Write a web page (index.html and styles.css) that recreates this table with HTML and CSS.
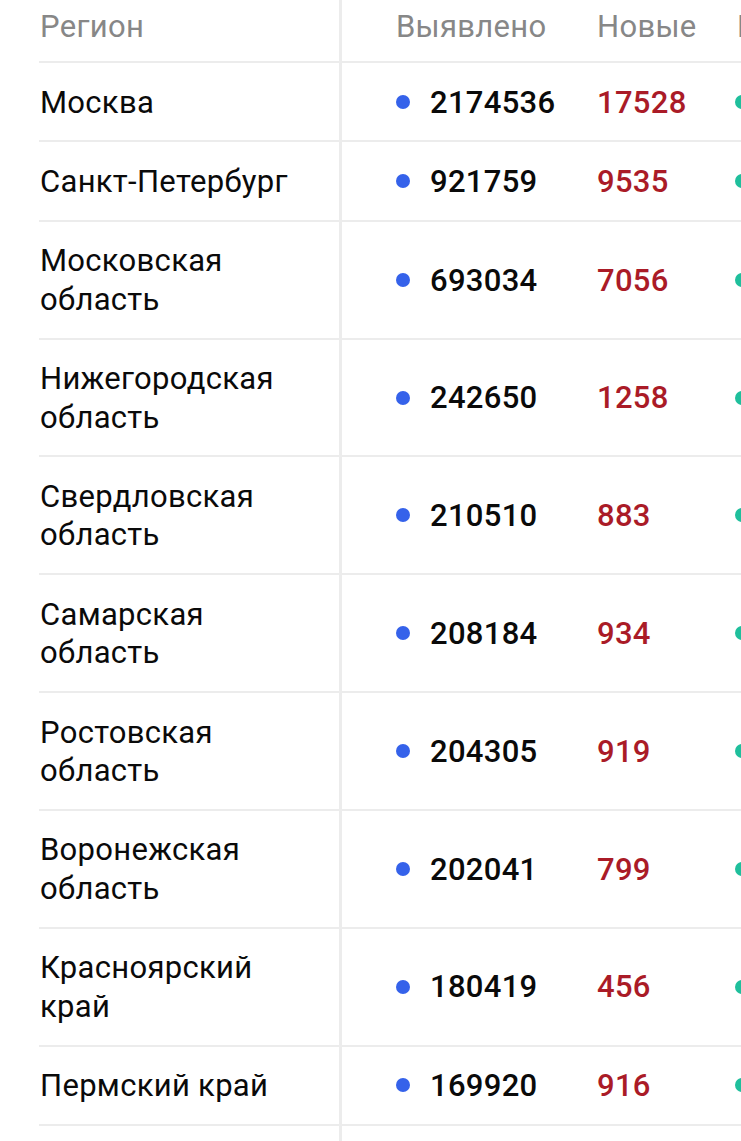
FILE: index.html
```html
<!DOCTYPE html>
<html lang="ru">
<head>
<meta charset="utf-8">
<title>Регионы</title>
<link rel="stylesheet" href="styles.css">
</head>
<body>
<div class="table">
  <div class="row head">
    <div class="cell region">Регион</div>
    <div class="cell c2">Выявлено</div>
    <div class="cell c3">Новые</div>
    <div class="cell c4">Выздоровели</div>
  </div>
  <div class="row">
    <div class="cell region">Москва</div>
    <div class="cell c2"><span class="dot blue"></span><span class="num">2174536</span></div>
    <div class="cell c3"><span class="num red">17528</span></div>
    <div class="cell c4"><span class="dot green"></span></div>
  </div>
  <div class="row">
    <div class="cell region">Санкт-Петербург</div>
    <div class="cell c2"><span class="dot blue"></span><span class="num">921759</span></div>
    <div class="cell c3"><span class="num red">9535</span></div>
    <div class="cell c4"><span class="dot green"></span></div>
  </div>
  <div class="row">
    <div class="cell region">Московская<br>область</div>
    <div class="cell c2"><span class="dot blue"></span><span class="num">693034</span></div>
    <div class="cell c3"><span class="num red">7056</span></div>
    <div class="cell c4"><span class="dot green"></span></div>
  </div>
  <div class="row">
    <div class="cell region">Нижегородская<br>область</div>
    <div class="cell c2"><span class="dot blue"></span><span class="num">242650</span></div>
    <div class="cell c3"><span class="num red">1258</span></div>
    <div class="cell c4"><span class="dot green"></span></div>
  </div>
  <div class="row">
    <div class="cell region">Свердловская<br>область</div>
    <div class="cell c2"><span class="dot blue"></span><span class="num">210510</span></div>
    <div class="cell c3"><span class="num red">883</span></div>
    <div class="cell c4"><span class="dot green"></span></div>
  </div>
  <div class="row">
    <div class="cell region">Самарская<br>область</div>
    <div class="cell c2"><span class="dot blue"></span><span class="num">208184</span></div>
    <div class="cell c3"><span class="num red">934</span></div>
    <div class="cell c4"><span class="dot green"></span></div>
  </div>
  <div class="row">
    <div class="cell region">Ростовская<br>область</div>
    <div class="cell c2"><span class="dot blue"></span><span class="num">204305</span></div>
    <div class="cell c3"><span class="num red">919</span></div>
    <div class="cell c4"><span class="dot green"></span></div>
  </div>
  <div class="row">
    <div class="cell region">Воронежская<br>область</div>
    <div class="cell c2"><span class="dot blue"></span><span class="num">202041</span></div>
    <div class="cell c3"><span class="num red">799</span></div>
    <div class="cell c4"><span class="dot green"></span></div>
  </div>
  <div class="row">
    <div class="cell region">Красноярский<br>край</div>
    <div class="cell c2"><span class="dot blue"></span><span class="num">180419</span></div>
    <div class="cell c3"><span class="num red">456</span></div>
    <div class="cell c4"><span class="dot green"></span></div>
  </div>
  <div class="row">
    <div class="cell region">Пермский край</div>
    <div class="cell c2"><span class="dot blue"></span><span class="num">169920</span></div>
    <div class="cell c3"><span class="num red">916</span></div>
    <div class="cell c4"><span class="dot green"></span></div>
  </div>
  <div class="row">
    <div class="cell region">Краснодарский<br>край</div>
    <div class="cell c2"><span class="dot blue"></span><span class="num">165412</span></div>
    <div class="cell c3"><span class="num red">588</span></div>
    <div class="cell c4"><span class="dot green"></span></div>
  </div>
</div>
</body>
</html>
```

FILE: styles.css
```css
html, body {
  margin: 0;
  padding: 0;
  background: #ffffff;
  overflow: hidden;
  height: 1141px;
}

body {
  font-family: Roboto, "Noto Sans", "Liberation Sans", sans-serif;
  font-size: 31px;
  letter-spacing: 0.3px;
  color: #0a0a0a;
}

.table {
  margin-left: 39px;
  width: 1000px;
}

.row {
  display: grid;
  grid-template-columns: 303px 255px 138px 1fr;
  border-top: 2px solid #ececec;
}

.row.head {
  border-top: none;
  height: 61px;
}

.cell {
  display: flex;
  align-items: center;
  padding: 20.5px 0 18.5px;
  line-height: 38.4px;
  white-space: nowrap;
}

.cell.region {
  border-right: 3px solid #ececec;
  padding-left: 1px;
}

.cell.c2 {
  padding-left: 54px;
}

.head .cell {
  align-items: flex-start;
  padding-top: 8px;
  padding-bottom: 0;
  color: #878787;
}

.head .cell.c4 {
  padding-left: 2px;
}

.dot {
  width: 14px;
  height: 14px;
  border-radius: 50%;
  flex: none;
}

.dot.blue {
  background: #3562ea;
  margin-right: 20px;
  margin-top: -2px;
}

.dot.green {
  background: #1fbf9c;
  margin-top: -2px;
}

.num {
  font-weight: 500;
  color: #0a0a0a;
}

.num.red {
  color: #aa1b27;
}
```
